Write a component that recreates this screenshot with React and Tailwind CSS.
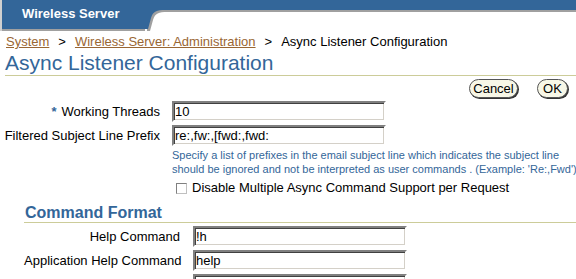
import React from "react";

function TextInput({ value, width }) {
  return (
    <div
      className={`${width} h-[21px] border-2 border-t-[#808080] border-l-[#808080] border-r-[#ffffff] border-b-[#ffffff] shadow-[inset_1px_1px_0_#404040,inset_-1px_-1px_0_#d4d0c8] bg-white pl-[1px] text-[13px] leading-[17px] text-black`}
    >
      {value}
    </div>
  );
}

function Button({ children, w }) {
  return (
    <div
      className={`${w} h-[19px] rounded-full border border-[#555] bg-[#f7f7e7] shadow-[1px_1px_0_#333] flex items-center justify-center text-[13px] text-black`}
    >
      {children}
    </div>
  );
}

export default function App() {
  const blue = "#336699";
  return (
    <div
      className="w-[576px] h-[279px] overflow-hidden bg-white text-black"
      style={{ fontFamily: '"Liberation Sans", Arial, sans-serif' }}
    >
      {/* Header */}
      <div className="flex items-start h-[33px]">
        <div className="w-[2px] h-[31px] bg-[#d0d0d0]" />
        <div className="flex flex-col">
          <div className="w-[143px] h-[29px] bg-[#336699] pl-[20px] pt-[6px] text-[13px] leading-[16px] font-bold text-white whitespace-nowrap">
            Wireless Server
          </div>
          <div className="h-[2px] bg-[#a0a0a0]" />
        </div>
        <svg width="25" height="31" viewBox="0 0 25 31" className="shrink-0">
          <path d="M2 2 H25 V12 H22 C14 12 10 13 8 20 L5 31 H2 Z" fill="#a0a0a0" />
          <path d="M0 0 H25 V10 H20 C12 10 8 11 6 18 L3 29 H0 Z" fill="#336699" />
        </svg>
        <div className="flex-1 flex flex-col">
          <div className="h-[10px] bg-[#336699]" />
          <div className="h-[2px] bg-[#a0a0a0]" />
        </div>
      </div>

      {/* Breadcrumb */}
      <div className="pl-[6px] mt-[1px] text-[13px] leading-[15px] whitespace-nowrap">
        <span className="text-[#996633] underline">System</span>
        <span className="mx-[9px]">&gt;</span>
        <span className="text-[#996633] underline">Wireless Server: Administration</span>
        <span className="mx-[9px]">&gt;</span>
        <span>Async Listener Configuration</span>
      </div>

      {/* Title */}
      <div className="pl-[5px] mt-[2px] text-[21px] leading-[24px] text-[#336699] whitespace-nowrap">
        Async Listener Configuration
      </div>
      <div className="ml-[5px] h-px bg-[#cccc99]" />

      {/* Buttons */}
      <div className="flex justify-end gap-[19px] pr-[8px] mt-[3px]">
        <Button w="w-[49px]">Cancel</Button>
        <Button w="w-[31px]">OK</Button>
      </div>

      {/* Form */}
      <div className="flex flex-col mt-[3px]">
        <div className="flex items-center">
          <div className="w-[160px] text-right text-[13px] whitespace-nowrap">
            <span className="text-[#336699] font-bold mr-[5px]">*</span>Working Threads
          </div>
          <div className="ml-[12px]">
            <TextInput value="10" width="w-[214px]" />
          </div>
        </div>
        <div className="flex items-center mt-[3px]">
          <div className="w-[160px] text-right text-[13px] whitespace-nowrap">
            Filtered Subject Line Prefix
          </div>
          <div className="ml-[12px]">
            <TextInput value="re:,fw:,[fwd:,fwd:" width="w-[214px]" />
          </div>
        </div>
        <div className="ml-[172px] mt-[2px] text-[11px] leading-[14px] text-[#336699] whitespace-nowrap">
          <div>Specify a list of prefixes in the email subject line which indicates the subject line</div>
          <div>should be ignored and not be interpreted as user commands . (Example: 'Re:,Fwd')</div>
        </div>
        <div className="ml-[176px] mt-[3px] flex items-center h-[18px]">
          <div className="w-[11px] h-[11px] border border-t-[#808080] border-l-[#808080] border-r-[#c0c0c0] border-b-[#c0c0c0] bg-white" />
          <span className="ml-[5px] text-[13px] whitespace-nowrap">
            Disable Multiple Async Command Support per Request
          </span>
        </div>
      </div>

      {/* Section */}
      <div className="ml-[24px] mt-[6px]">
        <div className="pl-[1px] text-[16px] leading-[19px] font-bold text-[#336699]">Command Format</div>
        <div className="h-px bg-[#cccc99]" />
        <div className="flex flex-col mt-[3px]">
          <div className="flex items-center">
            <div className="w-[156px] text-right text-[13px] whitespace-nowrap">Help Command</div>
            <div className="ml-[13px]">
              <TextInput value="!h" width="w-[214px]" />
            </div>
          </div>
          <div className="flex items-center mt-[3px]">
            <div className="w-[156px] text-right text-[13px] whitespace-nowrap">Application Help Command</div>
            <div className="ml-[13px]">
              <TextInput value="help" width="w-[214px]" />
            </div>
          </div>
          <div className="flex items-center mt-[3px]">
            <div className="w-[156px]" />
            <div className="ml-[13px]">
              <TextInput value="" width="w-[214px]" />
            </div>
          </div>
        </div>
      </div>
    </div>
  );
}
